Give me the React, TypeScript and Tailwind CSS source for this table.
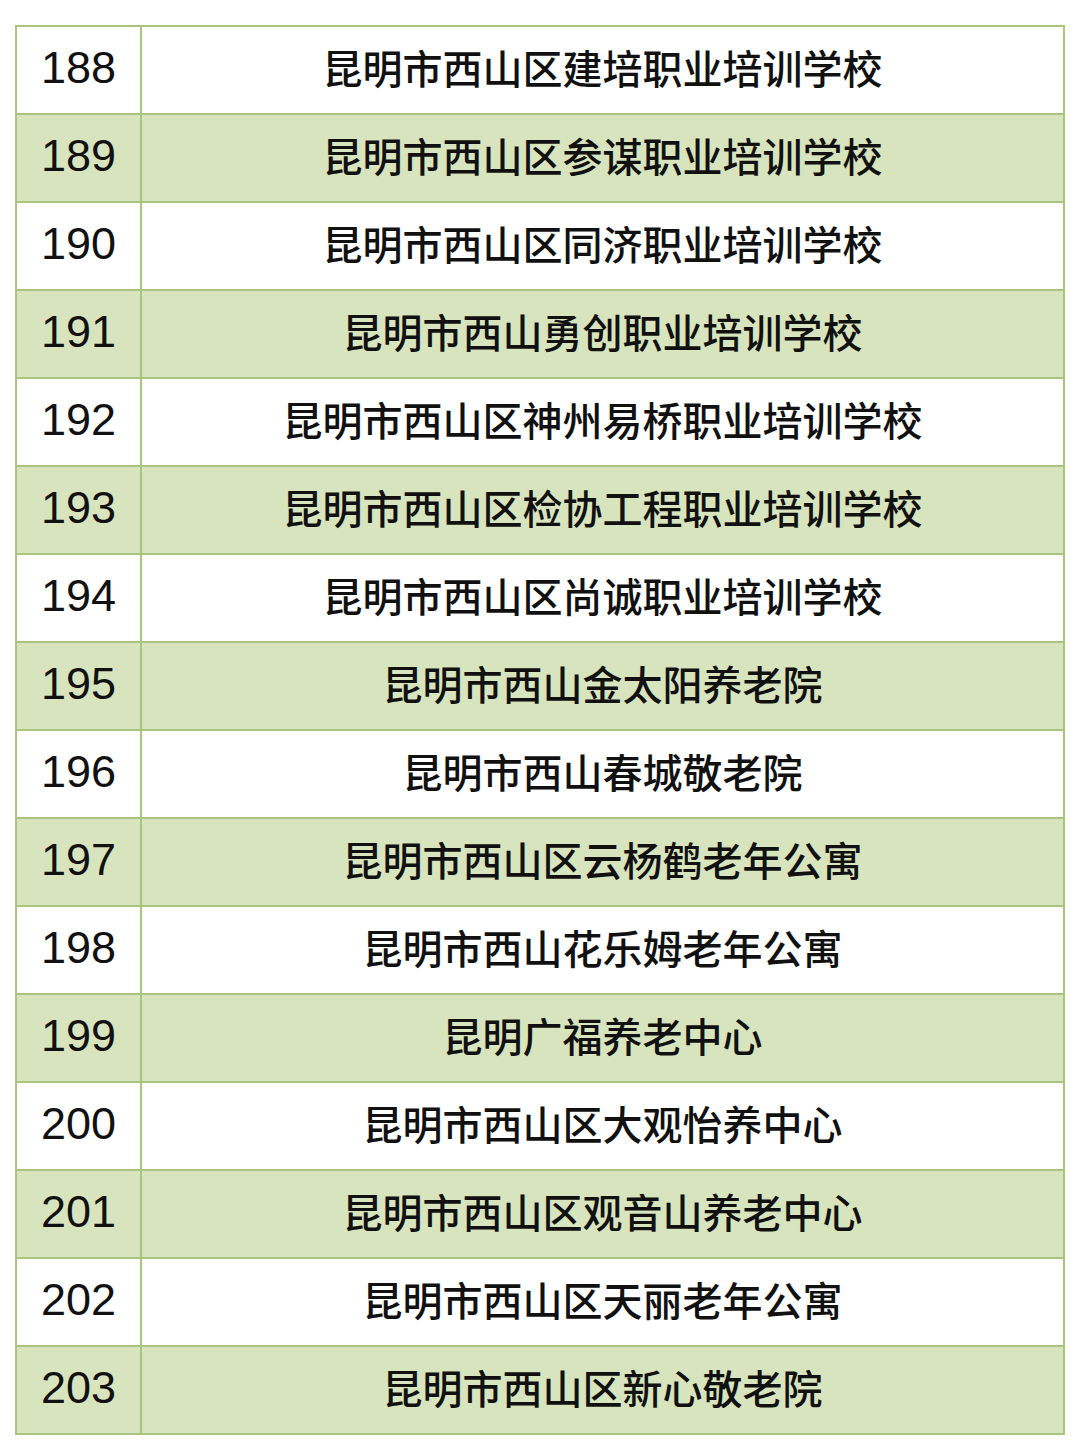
const rows: [string, string][] = [
  ["188", "昆明市西山区建培职业培训学校"],
  ["189", "昆明市西山区参谋职业培训学校"],
  ["190", "昆明市西山区同济职业培训学校"],
  ["191", "昆明市西山勇创职业培训学校"],
  ["192", "昆明市西山区神州易桥职业培训学校"],
  ["193", "昆明市西山区检协工程职业培训学校"],
  ["194", "昆明市西山区尚诚职业培训学校"],
  ["195", "昆明市西山金太阳养老院"],
  ["196", "昆明市西山春城敬老院"],
  ["197", "昆明市西山区云杨鹤老年公寓"],
  ["198", "昆明市西山花乐姆老年公寓"],
  ["199", "昆明广福养老中心"],
  ["200", "昆明市西山区大观怡养中心"],
  ["201", "昆明市西山区观音山养老中心"],
  ["202", "昆明市西山区天丽老年公寓"],
  ["203", "昆明市西山区新心敬老院"],
];

export default function App() {
  return (
    <div className="w-[1080px] h-[1445px] bg-white pt-[25px] pl-[15px]">
      <div className="w-[1050px] border-l-2 border-t-2 border-[#a9c47c]">
        {rows.map(([num, name], i) => (
          <div
            key={num}
            className={`grid grid-cols-[125px_1fr] h-[88px] ${i % 2 === 1 ? "bg-[#d8e4bd]" : "bg-white"}`}
          >
            <div className="flex items-center justify-center pb-[5px] border-r-2 border-b-2 border-[#a9c47c] text-[45px] text-[#111] font-['Liberation_Sans',Arial,sans-serif]">
              {num}
            </div>
            <div className="flex items-center justify-center pb-[6px] border-r-2 border-b-2 border-[#a9c47c] text-[40px] font-medium text-[#111] font-['Noto_Sans_CJK_SC',sans-serif]">
              {name}
            </div>
          </div>
        ))}
      </div>
    </div>
  );
}
